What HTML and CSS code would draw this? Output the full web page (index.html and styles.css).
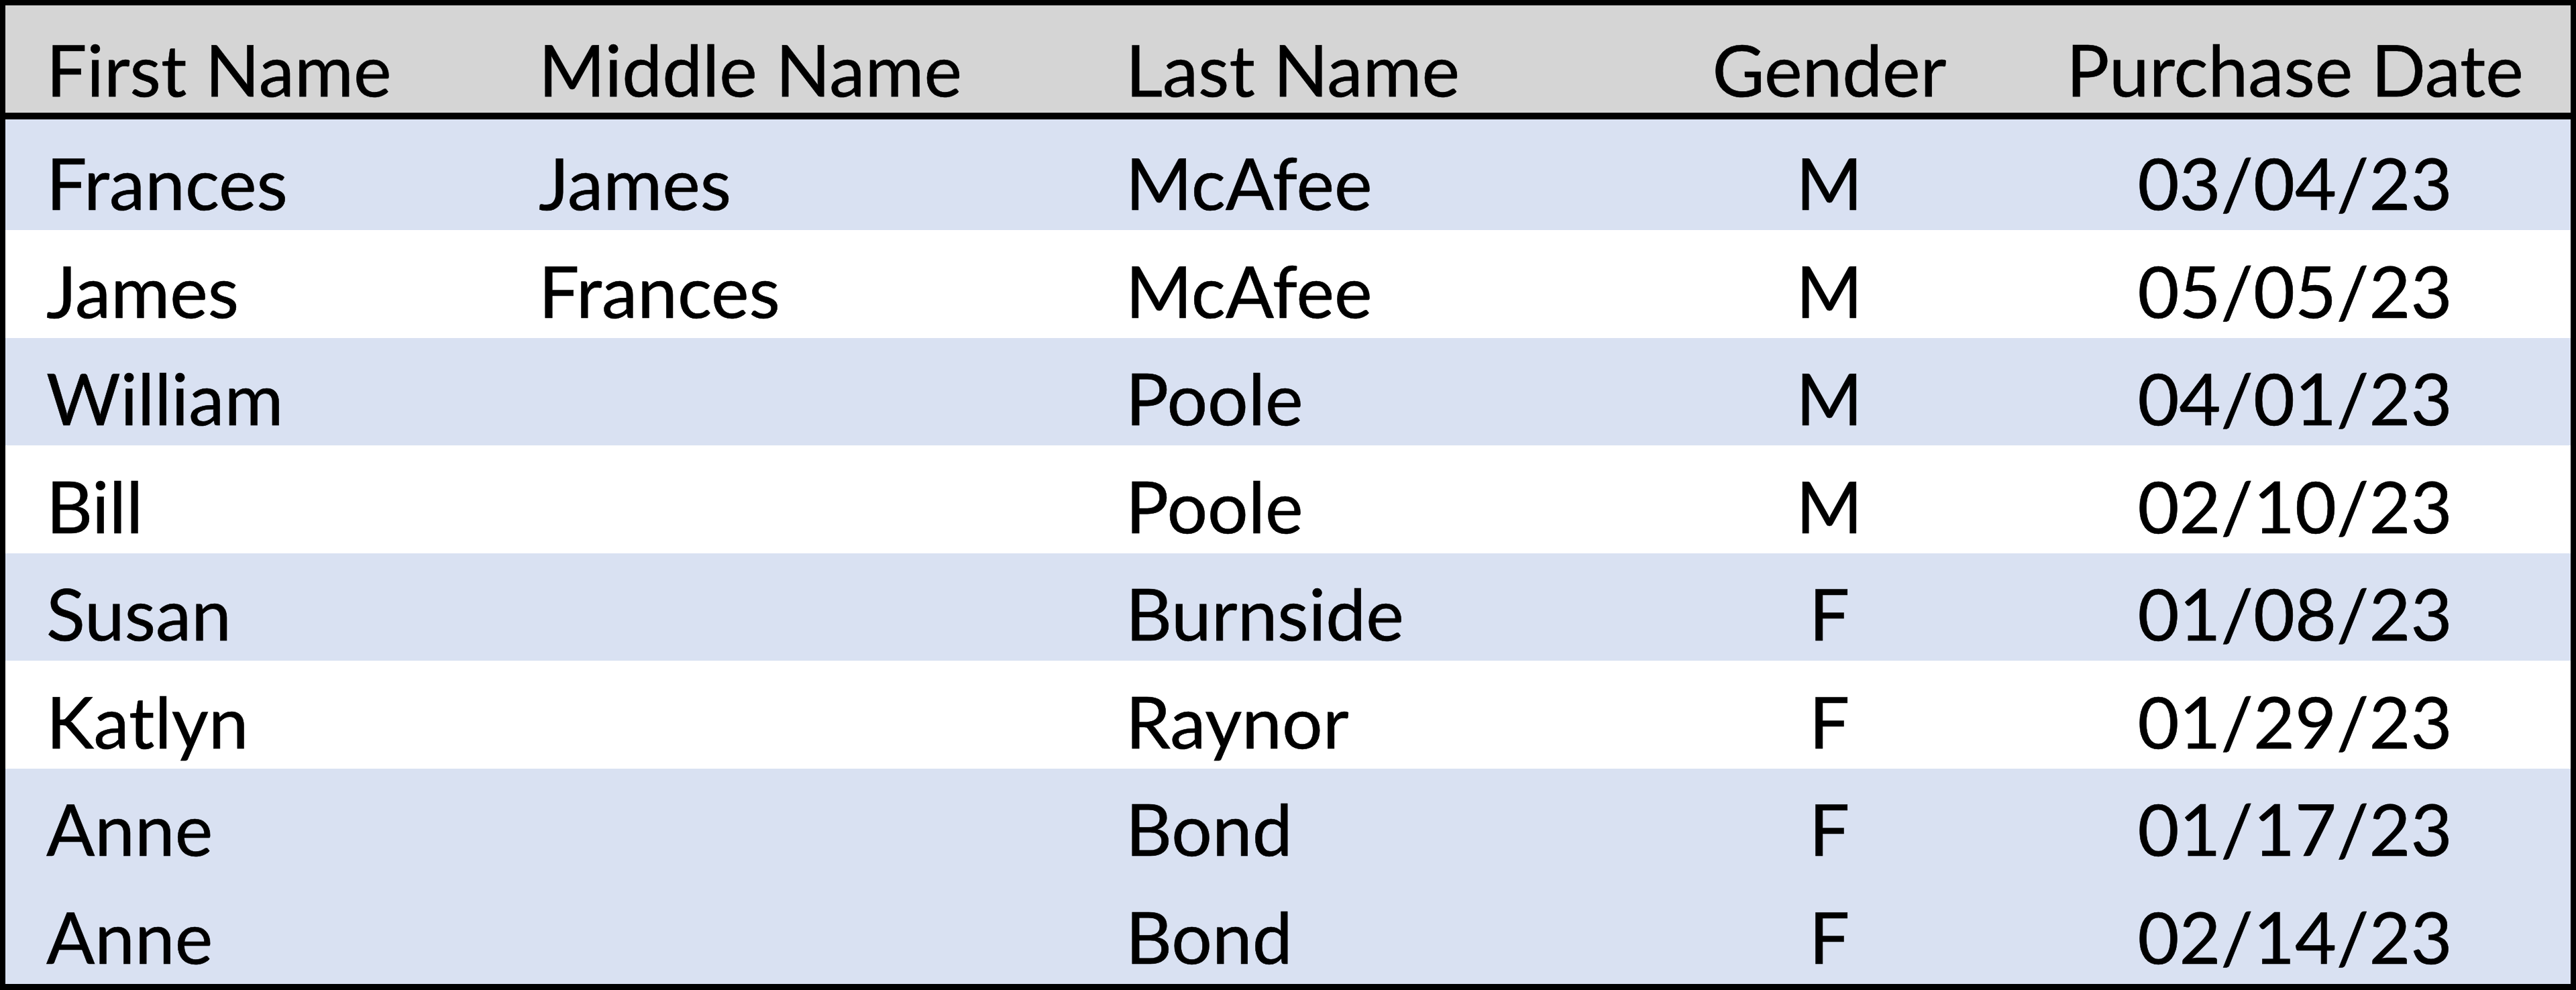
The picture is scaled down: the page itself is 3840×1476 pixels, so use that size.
FILE: index.html
```html
<!DOCTYPE html>
<html lang="en">
<head>
<meta charset="utf-8">
<title>Purchases</title>
<link rel="stylesheet" href="styles.css">
</head>
<body>
<div class="sheet">
  <div class="row head">
    <div class="cell">First Name</div>
    <div class="cell">Middle Name</div>
    <div class="cell">Last Name</div>
    <div class="cell center">Gender</div>
    <div class="cell center date">Purchase Date</div>
  </div>
  <div class="row band first">
    <div class="cell">Frances</div><div class="cell">James</div><div class="cell">McAfee</div><div class="cell center">M</div><div class="cell center date">03/04/23</div>
  </div>
  <div class="row">
    <div class="cell">James</div><div class="cell">Frances</div><div class="cell">McAfee</div><div class="cell center">M</div><div class="cell center date">05/05/23</div>
  </div>
  <div class="row band">
    <div class="cell">William</div><div class="cell"></div><div class="cell">Poole</div><div class="cell center">M</div><div class="cell center date">04/01/23</div>
  </div>
  <div class="row">
    <div class="cell">Bill</div><div class="cell"></div><div class="cell">Poole</div><div class="cell center">M</div><div class="cell center date">02/10/23</div>
  </div>
  <div class="row band">
    <div class="cell">Susan</div><div class="cell"></div><div class="cell">Burnside</div><div class="cell center">F</div><div class="cell center date">01/08/23</div>
  </div>
  <div class="row">
    <div class="cell">Katlyn</div><div class="cell"></div><div class="cell">Raynor</div><div class="cell center">F</div><div class="cell center date">01/29/23</div>
  </div>
  <div class="row band">
    <div class="cell">Anne</div><div class="cell"></div><div class="cell">Bond</div><div class="cell center">F</div><div class="cell center date">01/17/23</div>
  </div>
  <div class="row band">
    <div class="cell">Anne</div><div class="cell"></div><div class="cell">Bond</div><div class="cell center">F</div><div class="cell center date">02/14/23</div>
  </div>
</div>
</body>
</html>
```
FILE: styles.css
```css
* { box-sizing: border-box; }
html, body {
  margin: 0;
  padding: 0;
  background: #ffffff;
}
.sheet {
  width: 3840px;
  height: 1476px;
  border-style: solid;
  border-color: #000000;
  border-width: 8px 8px 9px 8px;
  display: flex;
  flex-direction: column;
  font-family: Lato, "Liberation Sans", sans-serif;
  font-size: 107px;
  line-height: 1;
  color: #000000;
  -webkit-text-stroke: 0.6px #000000;
  background: #ffffff;
}
.row {
  display: grid;
  grid-template-columns: 727px 875px 790px 654px 1fr;
  height: 160.57px;
  flex: none;
}
.row.head {
  height: 170px;
  background: #d5d5d5;
  border-bottom: 10px solid #000000;
}
.row.first { height: 165px; }
.band { background: #d9e1f2; }
.cell {
  display: flex;
  align-items: flex-end;
  padding-left: 68px;
  padding-bottom: 18px;
  white-space: nowrap;
}
.cell:first-child { padding-left: 61px; }
.head .cell { padding-bottom: 12px; }
.cell.center {
  justify-content: center;
  padding-left: 0;
}
.cell.date { padding-right: 44px; }
```
